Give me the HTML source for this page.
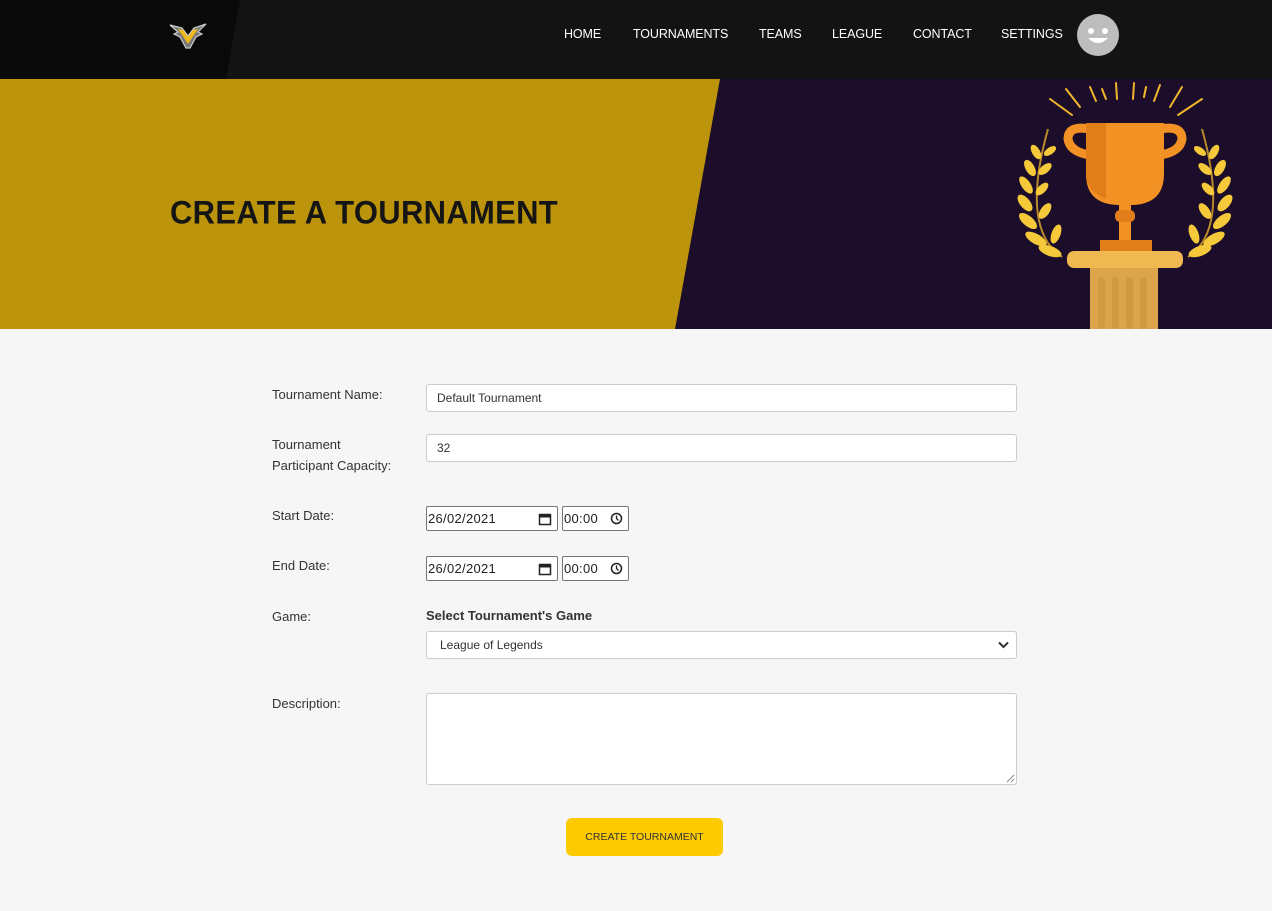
<!DOCTYPE html>
<html><head><meta charset="utf-8"><style>
*{box-sizing:border-box;margin:0;padding:0}
body{width:1272px;height:911px;background:#f6f6f6;font-family:"Liberation Sans",sans-serif;overflow:hidden;position:relative}
.nav{position:absolute;left:0;top:0;width:1272px;height:79px;background:#131313;overflow:hidden}
.nav .dark{position:absolute;left:0;top:0;width:240px;height:79px;background:#090909;clip-path:polygon(0 0,240px 0,226px 79px,0 79px)}
.nav a{position:absolute;top:27px;color:#fff;font-size:12.5px;text-decoration:none;letter-spacing:-.1px}
.hero{position:absolute;left:0;top:79px;width:1272px;height:250px;background:#1c0d2a;overflow:hidden}
.hero .gold{position:absolute;left:0;top:0;width:720px;height:250px;background:#bc940b;clip-path:polygon(0 0,720px 0,675px 250px,0 250px)}
.hero h1{position:absolute;left:170px;top:116px;font-size:31px;font-weight:900;color:#151515;letter-spacing:.3px;transform:scaleY(1.05)}
.lbl{position:absolute;left:272px;font-size:13px;color:#333;line-height:21px}
.inp{position:absolute;left:426px;width:591px;height:28px;background:#fff;border:1px solid #ccc;border-radius:3px;font-size:12px;color:#333;padding:6px 10px}
.dt{position:absolute;height:25px;border:1px solid #767676;border-radius:2px;background:#fff;font-size:13px;color:#222;padding:4px 1px;letter-spacing:.3px}
.dt svg{position:absolute;right:5px;top:5px}
.btn{position:absolute;left:566px;top:818px;width:157px;height:38px;background:#fdca00;border-radius:6px;font-size:10.5px;color:#333;text-align:center;line-height:38px}
</style></head><body>
<div class="nav"><div class="dark"></div>
<svg style="position:absolute;left:168px;top:20px" width="40" height="32" viewBox="0 0 40 32"><path d="M2 5 L14 8 L20 16 L26 8 L38 4 L30 12 L34 14 L28 17 L22 28 L18 28 L12 17 L6 14 L10 12Z" fill="#777" stroke="#ccc" stroke-width="1.2"/><path d="M10 9 L20 24 L30 9 L25 10 L20 17 L15 10Z" fill="#f0b818"/></svg>
<a style="left:564px">HOME</a><a style="left:633px">TOURNAMENTS</a><a style="left:759px">TEAMS</a><a style="left:832px">LEAGUE</a><a style="left:913px">CONTACT</a><a style="left:1001px">SETTINGS</a>
<svg style="position:absolute;left:1076px;top:14px" width="44" height="42" viewBox="0 0 44 42"><circle cx="22" cy="21" r="21" fill="#bdbdbd"/><ellipse cx="15" cy="17" rx="3" ry="3" fill="#fff"/><ellipse cx="29" cy="17" rx="3" ry="3" fill="#fff"/><path d="M12 24 Q22 34 32 24Z" fill="#fff"/></svg>
</div>
<div class="hero"><div class="gold"></div><h1>CREATE A TOURNAMENT</h1>
<svg style="position:absolute;left:1000px;top:0" width="272" height="250" viewBox="0 0 272 250">
<g stroke="#f0b62a" stroke-width="2" stroke-linecap="round"><line x1="50" y1="20" x2="72" y2="36"/><line x1="66" y1="10" x2="80" y2="28"/><line x1="90" y1="8" x2="96" y2="22"/><line x1="102" y1="10" x2="106" y2="20"/><line x1="116" y1="4" x2="117" y2="20"/><line x1="134" y1="4" x2="133" y2="20"/><line x1="146" y1="8" x2="144" y2="18"/><line x1="160" y1="6" x2="154" y2="22"/><line x1="182" y1="8" x2="170" y2="28"/><line x1="202" y1="20" x2="178" y2="36"/></g>
<g fill="none" stroke="#f39224" stroke-width="9"><path d="M90 50 Q68 46 68 60 Q70 73 90 76"/><path d="M160 50 Q182 46 182 60 Q180 73 160 76"/></g>
<path d="M86 44 H164 V95 Q164 126 130 126 H120 Q86 126 86 95Z" fill="#f39224"/><path d="M86 44 H106 V120 Q86 112 86 95Z" fill="#e07e1a"/>
<rect x="119" y="126" width="12" height="40" fill="#f39224"/><rect x="115" y="131" width="20" height="12" rx="5" fill="#e07e1a"/>
<rect x="100" y="161" width="52" height="11" fill="#e07e1a"/>
<rect x="67" y="172" width="116" height="17" rx="7" fill="#f0b850"/>
<rect x="90" y="189" width="68" height="61" fill="#dca54a"/>
<g fill="#d09a40"><rect x="98" y="198" width="7" height="52" rx="3"/><rect x="112" y="198" width="7" height="52" rx="3"/><rect x="126" y="198" width="7" height="52" rx="3"/><rect x="140" y="198" width="7" height="52" rx="3"/></g>
<g fill="none" stroke="#b88a2a" stroke-width="2"><path d="M62 178 Q20 150 48 50"/><path d="M188 178 Q230 150 202 50"/></g>
<g fill="#f6c93a">
<ellipse cx="50" cy="172" rx="12" ry="5" transform="rotate(20 50 172)"/><ellipse cx="36" cy="160" rx="12" ry="5" transform="rotate(30 36 160)"/><ellipse cx="28" cy="142" rx="11" ry="5" transform="rotate(40 28 142)"/><ellipse cx="25" cy="124" rx="10" ry="5" transform="rotate(50 25 124)"/><ellipse cx="26" cy="106" rx="10" ry="4.5" transform="rotate(55 26 106)"/><ellipse cx="30" cy="89" rx="9" ry="4.5" transform="rotate(60 30 89)"/><ellipse cx="36" cy="73" rx="8" ry="4" transform="rotate(60 36 73)"/><ellipse cx="56" cy="155" rx="10" ry="4.5" transform="rotate(-70 56 155)"/><ellipse cx="45" cy="132" rx="9" ry="4.5" transform="rotate(-55 45 132)"/><ellipse cx="42" cy="110" rx="8" ry="4" transform="rotate(-45 42 110)"/><ellipse cx="45" cy="90" rx="8" ry="4" transform="rotate(-40 45 90)"/><ellipse cx="50" cy="72" rx="7" ry="3.5" transform="rotate(-35 50 72)"/>
<ellipse cx="200" cy="172" rx="12" ry="5" transform="rotate(-20 200 172)"/><ellipse cx="214" cy="160" rx="12" ry="5" transform="rotate(-30 214 160)"/><ellipse cx="222" cy="142" rx="11" ry="5" transform="rotate(-40 222 142)"/><ellipse cx="225" cy="124" rx="10" ry="5" transform="rotate(-50 225 124)"/><ellipse cx="224" cy="106" rx="10" ry="4.5" transform="rotate(-55 224 106)"/><ellipse cx="220" cy="89" rx="9" ry="4.5" transform="rotate(-60 220 89)"/><ellipse cx="214" cy="73" rx="8" ry="4" transform="rotate(-60 214 73)"/><ellipse cx="194" cy="155" rx="10" ry="4.5" transform="rotate(70 194 155)"/><ellipse cx="205" cy="132" rx="9" ry="4.5" transform="rotate(55 205 132)"/><ellipse cx="208" cy="110" rx="8" ry="4" transform="rotate(45 208 110)"/><ellipse cx="205" cy="90" rx="8" ry="4" transform="rotate(40 205 90)"/><ellipse cx="200" cy="72" rx="7" ry="3.5" transform="rotate(35 200 72)"/></g>
</svg></div>
<div class="lbl" style="top:384px">Tournament Name:</div><div class="inp" style="top:384px">Default Tournament</div>
<div class="lbl" style="top:434px">Tournament<br>Participant Capacity:</div><div class="inp" style="top:434px">32</div>
<div class="lbl" style="top:505px">Start Date:</div>
<div class="dt" style="left:426px;top:506px;width:132px">26/02/2021<svg width="14" height="14" viewBox="0 0 14 14"><rect x="1.5" y="2.5" width="11" height="10" fill="none" stroke="#222" stroke-width="1.5"/><rect x="1.5" y="2.5" width="11" height="3" fill="#222"/></svg></div>
<div class="dt" style="left:562px;top:506px;width:67px">00:00<svg width="13" height="13" viewBox="0 0 13 13"><circle cx="6.5" cy="6.5" r="5" fill="none" stroke="#222" stroke-width="1.5"/><path d="M6.5 3.5V6.5L8.5 8.5" fill="none" stroke="#222" stroke-width="1.3"/></svg></div>
<div class="lbl" style="top:555px">End Date:</div>
<div class="dt" style="left:426px;top:556px;width:132px">26/02/2021<svg width="14" height="14" viewBox="0 0 14 14"><rect x="1.5" y="2.5" width="11" height="10" fill="none" stroke="#222" stroke-width="1.5"/><rect x="1.5" y="2.5" width="11" height="3" fill="#222"/></svg></div>
<div class="dt" style="left:562px;top:556px;width:67px">00:00<svg width="13" height="13" viewBox="0 0 13 13"><circle cx="6.5" cy="6.5" r="5" fill="none" stroke="#222" stroke-width="1.5"/><path d="M6.5 3.5V6.5L8.5 8.5" fill="none" stroke="#222" stroke-width="1.3"/></svg></div>
<div class="lbl" style="top:606px">Game:</div>
<div style="position:absolute;left:426px;top:608px;font-size:13px;font-weight:bold;color:#333">Select Tournament's Game</div>
<div class="inp" style="top:631px;padding-left:13px">League of Legends<svg style="position:absolute;right:7px;top:9px" width="11" height="8" viewBox="0 0 11 8"><path d="M1 1.5 L5.5 6 L10 1.5" fill="none" stroke="#333" stroke-width="2"/></svg></div>
<div class="lbl" style="top:693px">Description:</div>
<div class="inp" style="top:693px;height:92px"><svg style="position:absolute;right:1px;bottom:1px" width="9" height="9"><path d="M8 1L1 8M8 5L5 8" stroke="#888"/></svg></div>
<div class="btn">CREATE TOURNAMENT</div>
</body></html>
